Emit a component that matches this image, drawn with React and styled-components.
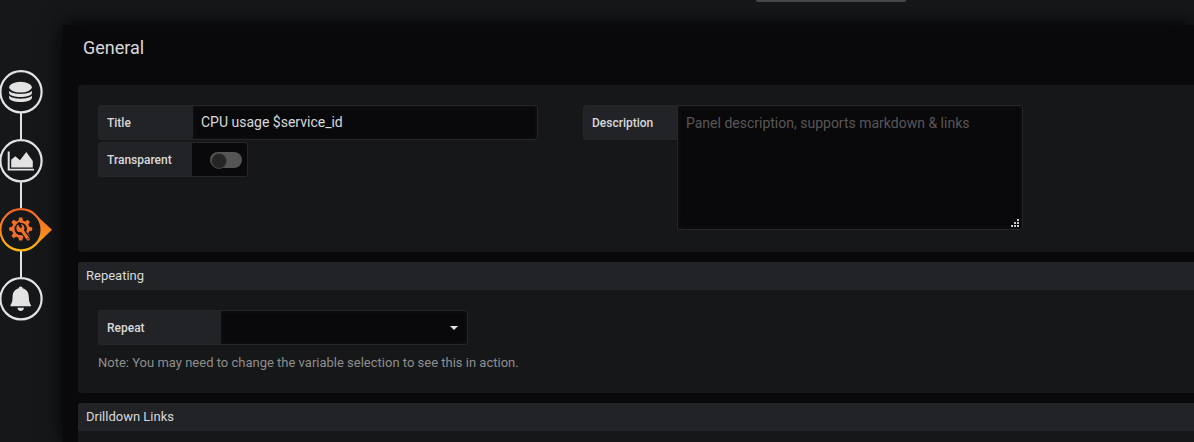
import React, { useState } from 'react'
import styled, { createGlobalStyle } from 'styled-components'

const GlobalStyle = createGlobalStyle`
* {
  box-sizing: border-box;
}
body {
  margin: 0;
  background: #161719;
  color: #d8d9da;
  font-family: Roboto, "Liberation Sans", sans-serif;
  font-size: 13px;
  overflow: hidden;
}
`

const Page = styled.div`
  position: relative;
  display: flex;
  height: 100vh;
  overflow: hidden;
`

/* drag handle between the panel preview and the editor */
const ResizeHandle = styled.div`
  position: absolute;
  top: 0;
  left: 756px;
  width: 150px;
  height: 2px;
  border-radius: 0 0 3px 3px;
  background: #47484b;
`

const Nav = styled.nav`
  position: relative;
  z-index: 1;
  flex: 0 0 63px;
  display: flex;
  flex-direction: column;
  padding-top: 70px;
`

const NavItem = styled.button`
  display: block;
  width: 43px;
  height: 43px;
  padding: 0;
  border: 0;
  background: none;
  cursor: pointer;
  svg {
    display: block;
    overflow: visible;
  }
`

const NavLine = styled.div`
  width: 2px;
  height: 26px;
  margin-left: 20px;
  background: #e3e3e3;
`

const Editor = styled.main`
  flex: 1;
  min-width: 0;
  margin-top: 25px;
  padding: 12px 0 0 15px;
  background: #09090b;
  box-shadow: 0 0 20px 0 #000;
`

const Heading = styled.h1`
  margin: 0 0 26px;
  padding-left: 5px;
  font-size: 18px;
  font-weight: 400;
  line-height: 22px;
`

const Section = styled.section`
  margin-bottom: 10px;
  border-radius: 3px 0 0 3px;
  background: #161719;
  overflow: hidden;
`

const SectionHeader = styled.h2`
  margin: 0;
  padding: 0 8px;
  background: #222326;
  font-size: 13px;
  font-weight: 400;
  line-height: 28px;
`

const SectionBody = styled.div`
  padding: 20px;
`

const Columns = styled.div`
  display: flex;
  gap: 45px;
  padding-bottom: 2px;
`

const Column = styled.div`
  flex: 0 1 440px;
  display: flex;
  flex-direction: column;
  gap: 2px;
`

const Field = styled.div`
  display: flex;
  align-items: flex-start;
`

const Label = styled.label`
  flex: 0 0 ${props => props.$width || '94px'};
  height: 35px;
  padding: 0 8px;
  border: 1px solid #262628;
  border-right: 0;
  border-radius: 3px 0 0 3px;
  background: #222326;
  font-size: 12px;
  font-weight: 500;
  line-height: 35px;
`

const Control = styled.div`
  position: relative;
  display: flex;
  flex: ${props => props.$width ? `0 1 ${props.$width}` : '1'};
  min-width: 0;
`

const inputBase = `
  width: 100%;
  margin: 0;
  padding: 0 8px 2px;
  border: 1px solid #262628;
  border-left: 0;
  border-radius: 0 3px 3px 0;
  outline: none;
  background: #09090b;
  box-shadow: inset 0 0 5px #141416;
  color: #d8d9da;
  font-family: inherit;
  font-size: 14px;
`

const TextInput = styled.input`
  ${inputBase}
  height: 35px;
`

const TextArea = styled.textarea`
  ${inputBase}
  height: 125px;
  padding: 7px 8px;
  border-left: 1px solid #262628;
  line-height: 20px;
  resize: none;
  &::placeholder {
    color: #5a5658;
    opacity: 1;
  }
`

const Select = styled.select`
  ${inputBase}
  height: 35px;
  appearance: none;
`

const Caret = styled.svg`
  position: absolute;
  top: 16px;
  right: 10px;
  pointer-events: none;
`

const Grip = styled.svg`
  position: absolute;
  right: 3px;
  bottom: 2px;
  pointer-events: none;
`

const SwitchBox = styled.div`
  display: flex;
  align-items: center;
  justify-content: flex-end;
  width: 56px;
  height: 35px;
  padding-right: 5px;
  border: 1px solid #262628;
  border-left: 0;
  border-radius: 0 3px 3px 0;
  background: #09090b;
`

const Switch = styled.input`
  appearance: none;
  display: flex;
  width: 32px;
  height: 16px;
  margin: 0;
  padding: 1px;
  border-radius: 8px;
  background: #555556;
  &::before {
    content: '';
    width: 14px;
    height: 14px;
    border: 1px solid #444;
    border-radius: 50%;
    background: #262425;
  }
  &:checked {
    justify-content: flex-end;
  }
`

const Note = styled.p`
  margin: 8px 0 0;
  color: #8e8e8e;
  line-height: 20px;
`

const Ring = ({ active, children }) => (
  <svg width="43" height="43" viewBox="0 0 43 43">
    <defs>
      <linearGradient id="ring" gradientUnits="userSpaceOnUse" x1="0" y1="0" x2="0" y2="43">
        <stop offset="0" stopColor="#f0642a" />
        <stop offset="0.5" stopColor="#f58220" />
        <stop offset="1" stopColor="#fbb812" />
      </linearGradient>
    </defs>
    {active && <path d="M36 7L52 21.8L36 37Z" fill="url(#ring)" />}
    <circle cx="21" cy="21.8" r="20.6" fill="#161719" stroke={active ? 'url(#ring)' : '#e3e3e3'} strokeWidth="2.2" />
    {children}
  </svg>
)

const QueriesIcon = () => (
  <g fill="#e3e3e3">
    <ellipse cx="20.5" cy="17.2" rx="11.4" ry="5.4" />
    <path d="M9.1 20.8C12 25 29 25 31.9 20.8V23.2C30.5 28.2 10.5 28.2 9.1 23.2Z" />
    <path d="M9.1 25.6C12 29.8 29 29.8 31.9 25.6V28C30.5 33.4 10.5 33.4 9.1 28Z" />
  </g>
)

const ChartIcon = () => (
  <g fill="#e3e3e3">
    <path d="M7.7 12.5H9.7V29.7H34V31.5H7.7Z" />
    <path d="M11.2 28.4V20.7L15.3 17.2L20 21.2L26.3 13L31 19.6L32.8 22V28.4Z" />
  </g>
)

const teeth = [0, 45, 90, 135, 180, 225, 270, 315]

const GearIcon = () => (
  <g>
    <circle cx="20.7" cy="21" r="7.5" fill="none" stroke="#f0702a" strokeWidth="2.6" />
    {teeth.map(a => (
      <path key={a} d="M18.3 13L19.1 9.5H22.3L23.1 13Z" fill="#f0702a" transform={`rotate(${a} 20.7 21)`} />
    ))}
    <path d="M21.5 21.5L28.2 31" stroke="#161719" strokeWidth="5.6" strokeLinecap="round" />
    <path d="M21 21L28.2 31" stroke="#f0702a" strokeWidth="3" strokeLinecap="round" />
    <circle cx="20.4" cy="20.2" r="4" fill="#f0702a" />
    <path d="M17.2 15L20.2 20.2L22.4 18.9L19.4 13.7Z" fill="#161719" />
    <circle cx="28" cy="30.7" r="0.7" fill="#161719" />
  </g>
)

const BellIcon = () => (
  <g fill="#e3e3e3">
    <path d="M20.7 9.6C22 9.6 22.6 10.4 22.6 11.3C26.6 12.3 28.6 15.5 28.8 19.5C29 24 29.2 25.2 31 28.2V29.3H10.4V28.2C12.2 25.2 12.4 24 12.6 19.5C12.8 15.5 14.8 12.3 18.8 11.3C18.8 10.4 19.4 9.6 20.7 9.6Z" />
    <path d="M17.4 30.8H24C23.6 33 22.4 34 20.7 34S17.8 33 17.4 30.8Z" />
  </g>
)

const tabs = [
  { name: 'Queries', icon: <QueriesIcon /> },
  { name: 'Visualization', icon: <ChartIcon /> },
  { name: 'General', icon: <GearIcon /> },
  { name: 'Alert', icon: <BellIcon /> },
]

const App = () => {
  const [tab, setTab] = useState('General')
  const [title, setTitle] = useState('CPU usage $service_id')
  const [transparent, setTransparent] = useState(false)

  return (
    <Page>
      <GlobalStyle />
      <ResizeHandle />
      <Nav>
        {tabs.map((t, i) => (
          <React.Fragment key={t.name}>
            {i > 0 && <NavLine />}
            <NavItem type="button" aria-label={t.name} onClick={() => setTab(t.name)}>
              <Ring active={tab === t.name}>{t.icon}</Ring>
            </NavItem>
          </React.Fragment>
        ))}
      </Nav>
      <Editor>
        <Heading>General</Heading>
        <Section>
          <SectionBody>
            <Columns>
              <Column>
                <Field>
                  <Label $width="95px" htmlFor="title">Title</Label>
                  <Control>
                    <TextInput id="title" value={title} onChange={e => setTitle(e.target.value)} />
                  </Control>
                </Field>
                <Field>
                  <Label htmlFor="transparent">Transparent</Label>
                  <SwitchBox>
                    <Switch
                      id="transparent"
                      type="checkbox"
                      checked={transparent}
                      onChange={e => setTransparent(e.target.checked)}
                    />
                  </SwitchBox>
                </Field>
              </Column>
              <Column>
                <Field>
                  <Label htmlFor="description">Description</Label>
                  <Control>
                    <TextArea id="description" placeholder="Panel description, supports markdown & links" />
                    <Grip width="9" height="9" viewBox="0 0 9 9" fill="#c4d0d0">
                      <path d="M6 0h2v2H6zM3 3h2v2H3zM6 3h2v2H6zM0 6h2v2H0zM3 6h2v2H3zM6 6h2v2H6z" />
                    </Grip>
                  </Control>
                </Field>
              </Column>
            </Columns>
          </SectionBody>
        </Section>
        <Section>
          <SectionHeader>Repeating</SectionHeader>
          <SectionBody>
            <Field>
              <Label $width="123px" htmlFor="repeat">Repeat</Label>
              <Control $width="247px">
                <Select id="repeat" />
                <Caret width="8" height="4" viewBox="0 0 8 4">
                  <path d="M0 0H8L4 4Z" fill="#e3e3e3" />
                </Caret>
              </Control>
            </Field>
            <Note>Note: You may need to change the variable selection to see this in action.</Note>
          </SectionBody>
        </Section>
        <Section>
          <SectionHeader>Drilldown Links</SectionHeader>
          <SectionBody />
        </Section>
      </Editor>
    </Page>
  )
}

export default App
